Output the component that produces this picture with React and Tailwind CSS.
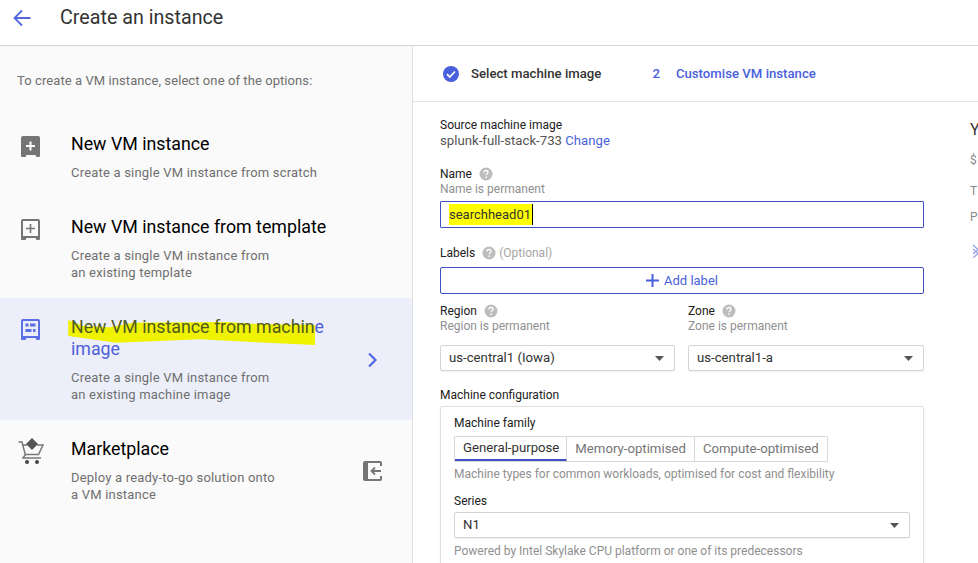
function Help({ className = "" }) {
  return (
    <svg width="14" height="14" viewBox="0 0 14 14" className={className}>
      <circle cx="7" cy="7" r="6.5" fill="#bdbdbd" />
      <path d="M5 5.4c0-1.2.9-1.900 2-1.900s2 .7 2 1.800c0 1.500-1.800 1.500-1.800 3" fill="none" stroke="#fff" strokeWidth="1.300" />
      <rect x="6.400" y="9.500" width="1.500" height="1.500" fill="#fff" />
    </svg>
  );
}

function Caret() {
  return (
    <svg width="9" height="5" viewBox="0 0 9 5" className="shrink-0">
      <path d="M0 0h9L4.500 5z" fill="#555" />
    </svg>
  );
}

function VmIcon({ kind }) {
  const color = kind === "image" ? "#5a6ee6" : "#757575";
  const shell = "M2 0h15a2 2 0 0 1 2 2v18a1 1 0 0 1-1 1h-2.500l-1-2H5.500l-1 2H1a1 1 0 0 1-1-1V2a2 2 0 0 1 2-2z";
  return (
    <svg width="19" height="21" viewBox="0 0 19 21">
      <path d={shell} fill={color} />
      {kind === "solid" && <path d="M8.500 5.500h2v3.500H14v2h-3.500v3.500h-2V11H5V9h3.500z" fill="#fff" />}
      {kind === "outline" && (
        <>
          <rect x="2" y="2" width="15" height="15" fill="#fafafa" />
          <path d="M8.700 5h1.600v3.700H14v1.600h-3.700V14H8.700v-3.700H5V8.700h3.700z" fill={color} />
        </>
      )}
      {kind === "image" && (
        <>
          <rect x="2" y="2" width="15" height="15" fill="#ecEFFa" />
          <rect x="4.500" y="4.500" width="3" height="3" fill={color} />
          <rect x="9" y="4.500" width="5.500" height="3" fill={color} />
          <rect x="4.500" y="10" width="6" height="3" fill={color} />
          <rect x="12" y="10" width="2.500" height="3" fill={color} />
        </>
      )}
    </svg>
  );
}

function CartIcon() {
  return (
    <svg width="27" height="26" viewBox="0 0 27 26" fill="none">
      <path d="M0.500 4H4l3.300 12.500L5 20h18" stroke="#777" strokeWidth="1.500" />
      <path d="M5 7h4M19 7h6l-4.500 9.500H7" stroke="#777" strokeWidth="1.500" />
      <path d="M14 0l6 6-6 6-6-6z" fill="#555" />
      <circle cx="9" cy="24" r="2" fill="#444" />
      <circle cx="19" cy="24" r="2" fill="#444" />
    </svg>
  );
}

function Option({ icon, title, desc, active, trailing }) {
  return (
    <div className={`flex pt-[18px] pb-[17px] ${active ? "bg-[#ecEFFa]" : ""}`}>
      <div className="w-[71px] shrink-0 pl-[21px] pt-[3px]">{icon}</div>
      <div className="w-[265px]">
        <div className={`text-[17.800px] leading-[22px] ${active ? "text-[#4f60d8]" : "text-black"}`}>{title}</div>
        <div className="mt-[9px] text-[13px] leading-[17px] text-[#6f6f6f] tracking-[0.2px]">
          {desc.map((d) => (
            <div key={d}>{d}</div>
          ))}
        </div>
      </div>
      {trailing && <div className="flex-1 flex items-center justify-center pl-[1px] pr-[4px] mt-[2px]">{trailing}</div>}
    </div>
  );
}

function Label({ children, help, extra }) {
  return (
    <div className="flex items-center h-4 text-[12px] text-[#212121]">
      <span>{children}</span>
      {help && <Help className="ml-[7px]" />}
      {extra && <span className="ml-[3px] text-[#a6a6a6]">{extra}</span>}
    </div>
  );
}

function Hint({ children }) {
  return <div className="text-[12px] leading-4 text-[#8f8f8f]">{children}</div>;
}

function Select({ value, className = "" }) {
  return (
    <div className={`flex items-center justify-between h-[26px] border border-[#d4d4d4] rounded-[2px] pl-2 pr-[10px] text-[13.200px] text-[#333] shadow-[0_1px_1px_rgba(0,0,0,0.06)] ${className}`}>
      <span>{value}</span>
      <Caret />
    </div>
  );
}

export default function App() {
  return (
    <div className="w-[978px] h-[563px] overflow-hidden bg-white font-['Roboto',sans-serif]">
      <header className="flex items-start h-[46px] border-b border-[#d6d6d6] pt-[6px]">
        <svg width="18" height="18" viewBox="0 0 18 18" fill="none" className="ml-[13px] mt-[3px]">
          <path d="M17.500 9H2M9 1.500L1.500 9 9 16.500" stroke="#5468e0" strokeWidth="1.800" />
        </svg>
        <h1 className="ml-[29px] text-[19.700px] leading-6 text-[#333]">Create an instance</h1>
      </header>

      <div className="flex h-[517px]">
        <aside className="w-[413px] shrink-0 bg-[#fafafa] border-r border-[#e0e0e0]">
          <div className="h-[69px] pt-[26px] pl-[17px] text-[13px] leading-[17px] text-[#6f6f6f] tracking-[0.08px]">
            To create a VM instance, select one of the options:
          </div>
          <Option
            icon={<VmIcon kind="solid" />}
            title="New VM instance"
            desc={["Create a single VM instance from scratch"]}
          />
          <Option
            icon={<VmIcon kind="outline" />}
            title="New VM instance from template"
            desc={["Create a single VM instance from", "an existing template"]}
          />
          <Option
            active
            icon={<VmIcon kind="image" />}
            title={
              <span className="relative block">
                <svg width="248" height="28" viewBox="0 0 248 28" className="absolute left-[-3px] top-[2px]">
                  <path
                    d="M0.300 2L15 8 42 9.300 65 4.700 158.700 4 188.700 6 247 7V27L198.700 24.700 132 21.300 48.700 24.700 0.300 18z"
                    fill="#eff200"
                  />
                </svg>
                <span className="relative">
                  <span className="text-[#4f5a20]">New VM instance from machin</span>e
                </span>
                <br />
                <span className="relative">image</span>
              </span>
            }
            desc={["Create a single VM instance from", "an existing machine image"]}
            trailing={
              <svg width="11" height="16" viewBox="0 0 11 16" fill="none" className="mb-[2px]">
                <path d="M2 1.500L8.500 8 2 14.500" stroke="#5468e0" strokeWidth="2.200" />
              </svg>
            }
          />
          <Option
            icon={
              <span className="block ml-[-3px] mt-[-3px]">
                <CartIcon />
              </span>
            }
            title="Marketplace"
            desc={["Deploy a ready-to-go solution onto", "a VM instance"]}
            trailing={
              <svg width="19" height="20" viewBox="0 0 19 20" fill="none" className="mt-[-2px]">
                <path d="M18 5V2a1 1 0 0 0-1-1H2a1 1 0 0 0-1 1v16a1 1 0 0 0 1 1h15a1 1 0 0 0 1-1v-3" stroke="#757575" strokeWidth="2" />
                <rect x="1" y="1" width="4" height="18" fill="#757575" />
                <path d="M18 10h-9M12 6.500L8.500 10l3.500 3.500" stroke="#757575" strokeWidth="1.800" />
              </svg>
            }
          />
        </aside>

        <main className="flex-1 min-w-0">
          <div className="flex items-center h-[56px] border-b border-[#e4e4e4] pl-[29px] text-[13.200px] font-medium">
            <svg width="18" height="18" viewBox="0 0 18 18" className="mr-[11px]">
              <circle cx="9" cy="9" r="8" fill="#4a5fdc" />
              <path d="M5 9.200l2.800 2.800L13 6.500" fill="none" stroke="#fff" strokeWidth="1.800" />
            </svg>
            <span className="text-[#333]">Select machine image</span>
            <span className="ml-[51px] text-[#4a5fdc]">2</span>
            <span className="ml-[16px] text-[#4a5fdc]">Customise VM instance</span>
          </div>

          <div className="flex">
            <div className="w-[484px] ml-[27px] shrink-0 pt-[15px]">
              <div className="text-[12px] leading-4 text-[#212121]">Source machine image</div>
              <div className="text-[13.200px] leading-4 text-[#555]">
                splunk-full-stack-733 <span className="text-[#4a5fdc]">Change</span>
              </div>

              <div className="mt-[17px]">
                <Label help>Name</Label>
              </div>
              <div className="-mt-[1px]">
                <Hint>Name is permanent</Hint>
              </div>
              <div className="mt-[4px] h-[27px] flex items-center border border-[#3f51c5] rounded-[1px] pl-2 text-[13px] text-[#333]">
                <span className="bg-[#ffff00] leading-[21px] pr-[1px] border-r border-black">searchhead01</span>
              </div>

              <div className="mt-[17px]">
                <Label help extra="(Optional)">Labels</Label>
              </div>
              <div className="mt-[6px] h-[27px] flex items-center justify-center border border-[#3f51c5] rounded-[2px] text-[13px] text-[#4a5fdc]">
                <svg width="13" height="13" viewBox="0 0 13 13" className="mr-[5px]">
                  <path d="M5.500 0h2v5.500H13v2H7.500V13h-2V7.500H0v-2h5.500z" fill="#4a5fdc" />
                </svg>
                Add label
              </div>

              <div className="grid grid-cols-[235px_236px] gap-x-[13px] mt-[9px]">
                <div>
                  <Label help>Region</Label>
                  <div className="-mt-[1px]"><Hint>Region is permanent</Hint></div>
                  <Select value="us-central1 (Iowa)" className="mt-[11px]" />
                </div>
                <div>
                  <Label help>Zone</Label>
                  <div className="-mt-[1px]"><Hint>Zone is permanent</Hint></div>
                  <Select value="us-central1-a" className="mt-[11px]" />
                </div>
              </div>

              <div className="mt-[16px] text-[12px] leading-4 text-[#212121]">Machine configuration</div>
              <div className="mt-[3px] border border-[#e0e0e0] rounded-[2px] px-[13px] pt-2 pb-3 shadow-[0_1px_2px_rgba(0,0,0,0.08)]">
                <div className="text-[12px] leading-4 text-[#212121]">Machine family</div>
                <div className="mt-[5px] inline-flex h-[26px] border border-[#d9d9d9] rounded-[1px] text-[13.200px] align-top">
                  <div className="flex items-center pl-2 pr-[7px] border-r border-[#d9d9d9] border-b-2 border-b-[#3f51c5] text-[#333]">General-purpose</div>
                  <div className="flex items-center px-2 border-r border-[#d9d9d9] text-[#757575]">Memory-optimised</div>
                  <div className="flex items-center px-2 text-[#757575]">Compute-optimised</div>
                </div>
                <div className="mt-[4px]"><Hint>Machine types for common workloads, optimised for cost and flexibility</Hint></div>
                <div className="mt-[11px] text-[12px] leading-4 text-[#212121]">Series</div>
                <Select value="N1" className="mt-[3px]" />
                <div className="mt-[5px]"><Hint>Powered by Intel Skylake CPU platform or one of its predecessors</Hint></div>
              </div>
            </div>

            <div className="ml-[46px] pt-[18px] whitespace-nowrap text-[#888]">
              <div className="text-[16px] leading-5 text-[#333]">Y</div>
              <div className="mt-[12px] text-[12px] leading-4">$</div>
              <div className="mt-[15px] text-[12px] leading-4">T</div>
              <div className="mt-[10px] text-[12px] leading-4">P</div>
              <svg width="10" height="14" viewBox="0 0 10 14" fill="none" className="mt-[19px] ml-[3px]">
                <path d="M0 1l5 4.500-5 4.500M0 5l5 4.500-5 4.500" stroke="#8c9be8" strokeWidth="1.200" />
              </svg>
            </div>
          </div>
        </main>
      </div>
    </div>
  );
}
